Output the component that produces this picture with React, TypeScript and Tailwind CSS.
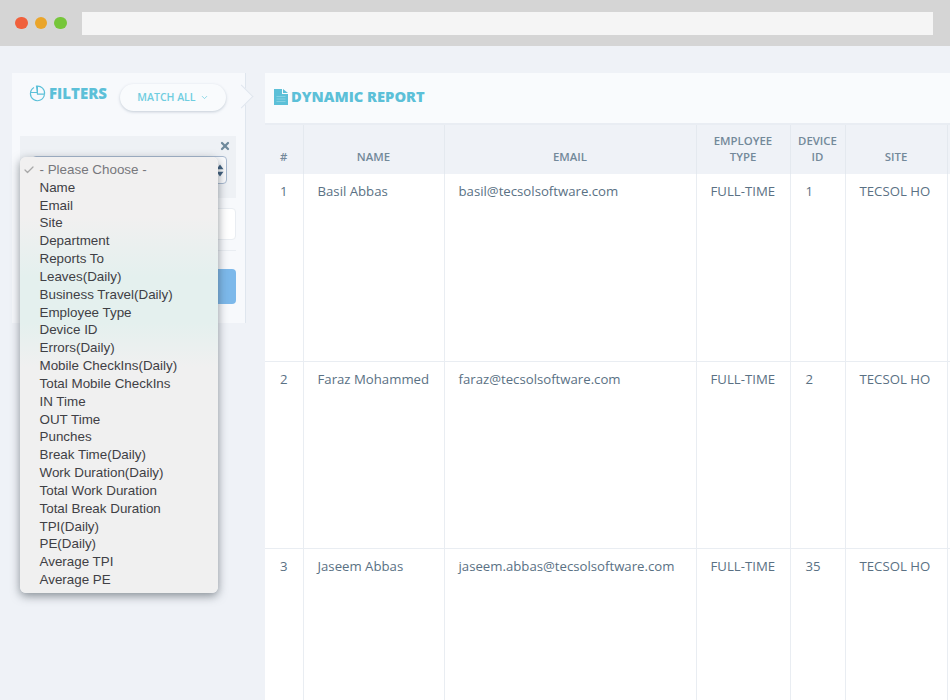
import { X, ChevronDown, Check } from 'lucide-react';

const options = [
  'Name', 'Email', 'Site', 'Department', 'Reports To', 'Leaves(Daily)', 'Business Travel(Daily)',
  'Employee Type', 'Device ID', 'Errors(Daily)', 'Mobile CheckIns(Daily)', 'Total Mobile CheckIns',
  'IN Time', 'OUT Time', 'Punches', 'Break Time(Daily)', 'Work Duration(Daily)', 'Total Work Duration',
  'Total Break Duration', 'TPI(Daily)', 'PE(Daily)', 'Average TPI', 'Average PE',
];

const rows = [
  { id: 1, name: 'Basil Abbas', email: 'basil@tecsolsoftware.com', device: 1 },
  { id: 2, name: 'Faraz Mohammed', email: 'faraz@tecsolsoftware.com', device: 2 },
  { id: 3, name: 'Jaseem Abbas', email: 'jaseem.abbas@tecsolsoftware.com', device: 35 },
];

function Filters() {
  return (
    <aside className="relative w-[234px] h-[250px] shrink-0 bg-[#f7f9fc] border-r border-[#dfe6ee] px-2">
      <div className="absolute -right-[5px] top-[15px] w-[17px] h-[17px] rotate-45 bg-[#f7f9fc] border-t border-r border-[#dfe6ee]" />
      <div className="flex h-[63px] pl-[9px]">
        <div className="flex items-center gap-[3px] h-[40px] text-[#5cc0d8] font-extrabold text-[15px]">
          <svg width="17" height="17" viewBox="0 0 17 17" fill="none" stroke="#5cc0d8" strokeWidth="1.2">
            <path d="M5 2.6A7 7 0 1 0 15.4 9.5" />
            <path d="M7.5 1.2a7 7 0 0 1 8 8H8.5z" />
            <path d="M1.5 7.5h7V1" strokeWidth="1" />
          </svg>
          <span>FILTERS</span>
        </div>
        <button className="relative z-10 ml-[13px] mt-[11px] w-[106px] h-[27px] rounded-full bg-[#f9fbfd] shadow-[0_1px_3px_rgba(120,140,160,0.4)] text-[#6fcde0] text-[10.5px] font-semibold flex items-center justify-center gap-1">
          MATCH ALL <ChevronDown size={9} />
        </button>
      </div>
      <div className="bg-[#eef1f5] h-[62px] mr-[1px] relative">
        <X size={12} strokeWidth={4.5} className="absolute right-[5px] top-[4px] text-[#6f8a9c]" />
        <div className="absolute right-[9px] left-[12px] top-[20px] h-[28px] bg-[#fafbfd] border border-[#a9bad0] rounded flex items-center justify-end pr-[2px]">
          <svg width="8" height="13" viewBox="0 0 8 13" fill="#3f5f7e">
            <path d="M4 0.5 7.5 5.2H0.5z" />
            <path d="M4 12.5 7.5 7.8H0.5z" />
          </svg>
        </div>
      </div>
      <div className="mt-[10px] h-[32px] mr-[1px] bg-white border border-[#e9edf2] rounded-sm" />
      <div className="mt-[10px] h-px mr-[1px] bg-[#e9edf2]" />
      <div className="mt-[18px] h-[35px] mr-[1px] bg-[#7cb8ea] rounded-sm" />
    </aside>
  );
}

function Dropdown() {
  return (
    <div
      className="absolute left-[20px] top-[157px] w-[198px] h-[436px] z-20 rounded-md pt-[4px] text-[13.4px] leading-[17.83px] text-[#3f4045] shadow-[0_3px_10px_rgba(50,60,70,0.55)] bg-[linear-gradient(#f1f0f0_0,#f1f0f0_60px,#e4f0ee_120px,#e4f0ee_165px,#f0f0f0_210px)]"
      style={{ fontFamily: '"Liberation Sans", Arial, sans-serif' }}
    >
      <div className="relative pl-[19.5px] text-[#77777c]">
        <Check size={12} strokeWidth={2.5} className="absolute left-[3px] top-[3px] text-[#a8a8a8]" />- Please Choose -
      </div>
      {options.map((o) => (
        <div key={o} className="pl-[19.5px]">{o}</div>
      ))}
    </div>
  );
}

function Report() {
  const th = 'border-r border-[#e4e9ef] px-1 pb-[9px] align-bottom text-center text-[11.4px] leading-[16px] font-semibold text-[#73899a]';
  const td = 'border-r border-[#e9edf2] align-top pt-[8px] text-[13.2px] leading-[18px] text-[#5a7184]';
  return (
    <main className="flex-1 min-w-0 bg-white">
      <div className="h-[52px] bg-[#f9fbfd] border-b-2 border-[#e9edf3] flex items-center gap-[3px] pl-[9px] pb-[3px] text-[#5cc0d8]">
        <svg width="14" height="16" viewBox="0 0 14 16" fill="#5cc0d8">
          <path d="M0 0h8v5h6v11H0z" />
          <path d="M9 0l5 4H9z" />
          <path d="M2.5 7.5h9M2.5 10h9M2.5 12.5h9" stroke="#8fd6e6" strokeWidth="0.8" />
        </svg>
        <span className="font-extrabold text-[14.7px]">DYNAMIC REPORT</span>
      </div>
      <table className="table-fixed border-collapse w-[685px]">
        <colgroup>
          <col className="w-[38px]" />
          <col className="w-[141px]" />
          <col className="w-[252px]" />
          <col className="w-[94px]" />
          <col className="w-[55px]" />
          <col className="w-[102px]" />
          <col />
        </colgroup>
        <thead>
          <tr className="h-[49px] bg-[#eff2f7]">
            <th className={th}>#</th>
            <th className={th}>NAME</th>
            <th className={th}>EMAIL</th>
            <th className={th}>EMPLOYEE<br />TYPE</th>
            <th className={th}>DEVICE<br />ID</th>
            <th className={th}>SITE</th>
            <th />
          </tr>
        </thead>
        <tbody>
          {rows.map((r) => (
            <tr key={r.id} className="h-[187px] border-b border-[#e9edf2]">
              <td className={`${td} pl-[15px]`}>{r.id}</td>
              <td className={`${td} pl-[14px]`}>{r.name}</td>
              <td className={`${td} pl-[14px]`}>{r.email}</td>
              <td className={`${td} pl-[14px]`}>FULL-TIME</td>
              <td className={`${td} pl-[15px]`}>{r.device}</td>
              <td className={`${td} pl-[14px]`}>TECSOL HO</td>
              <td />
            </tr>
          ))}
        </tbody>
      </table>
    </main>
  );
}

export default function App() {
  return (
    <div className="relative h-[700px] overflow-hidden bg-[#eff2f7]" style={{ fontFamily: '"Open Sans", sans-serif' }}>
      <div className="h-[46px] bg-[#d5d5d5] flex items-center gap-[7px] pl-[15px]">
        <span className="w-[12.5px] h-[12.5px] rounded-full bg-[#f0603c]" />
        <span className="w-[12.5px] h-[12.5px] rounded-full bg-[#eaa52a]" />
        <span className="w-[12.5px] h-[12.5px] rounded-full bg-[#76c63a]" />
        <div className="ml-[8px] w-[851px] h-[23px] bg-[#f5f5f5]" />
      </div>
      <div className="flex items-start gap-[19px] pl-[12px] pt-[27px] h-[654px]">
        <Filters />
        <Report />
      </div>
      <Dropdown />
    </div>
  );
}
